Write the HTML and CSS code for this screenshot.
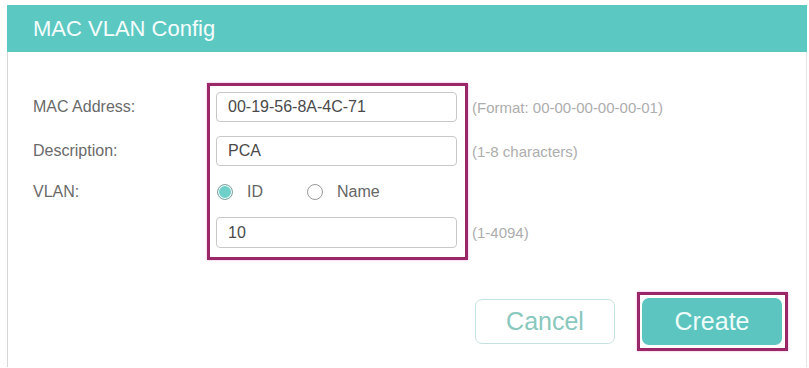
FILE: index.html
```html
<!DOCTYPE html>
<html lang="en">

<head>
    <meta charset="UTF-8">
    <meta name="viewport" content="width=device-width, initial-scale=1.0">
    <title>MAC VLAN Config</title>
    <link rel="stylesheet" href="styles.css">
</head>

<body>
    <!-- MAC VLAN Config Panel -->
    <div class="panel">
        <div class="panel-header">MAC VLAN Config</div>

        <div class="panel-body">
            <div class="form">
                <!-- Labels -->
                <div class="col labels">
                    <div class="row r1">MAC Address:</div>
                    <div class="row r2">Description:</div>
                    <div class="row r3">VLAN:</div>
                    <div class="row r4"></div>
                </div>

                <!-- Fields (highlighted) -->
                <div class="col fields">
                    <div class="row r1"><input class="text-input" type="text" value="00-19-56-8A-4C-71"></div>
                    <div class="row r2"><input class="text-input" type="text" value="PCA"></div>
                    <div class="row r3">
                        <label class="radio"><input type="radio" name="vlanType" checked> ID</label>
                        <label class="radio"><input type="radio" name="vlanType"> Name</label>
                    </div>
                    <div class="row r4"><input class="text-input" type="text" value="10"></div>
                </div>

                <!-- Hints -->
                <div class="col hints">
                    <div class="row r1">(Format: 00-00-00-00-00-01)</div>
                    <div class="row r2">(1-8 characters)</div>
                    <div class="row r3"></div>
                    <div class="row r4">(1-4094)</div>
                </div>
            </div>

            <div class="actions">
                <button class="btn btn-cancel">Cancel</button>
                <div class="create-mark">
                    <button class="btn btn-create">Create</button>
                </div>
            </div>
        </div>
    </div>
</body>

</html>
```

FILE: styles.css
```css
body {
    margin: 0;
    font-family: "Liberation Sans", Arial, sans-serif;
    background: #fff;
    overflow: hidden;
}

.panel {
    margin: 5px 0 0 7px;
    width: 800px;
}

.panel-header {
    height: 47px;
    background: #5cc8c2;
    color: #f4fdfc;
    font-size: 22px;
    line-height: 47px;
    padding-left: 26px;
}

.panel-body {
    border-left: 1px solid #d8d8d8;
    border-right: 1px solid #e6e6e6;
    padding: 31px 18px 16px 25px;
}

/* Form grid */
.form {
    display: flex;
    align-items: flex-start;
}

.col {
    display: flex;
    flex-direction: column;
}

.row {
    display: flex;
    align-items: center;
}

.r1 {
    height: 30px;
    margin-bottom: 14px;
}

.r2 {
    height: 30px;
}

.r3 {
    height: 51px;
}

.r4 {
    height: 31px;
}

.labels {
    width: 174px;
    padding-top: 9px;
    font-size: 16px;
    color: #6a6a6a;
}

.fields {
    border: 3px solid #9a2767;
    box-shadow: 0 0 2px #f0a8d0;
    padding: 6px 8px 9px 6px;
}

.hints {
    padding-top: 9px;
    margin-left: 4px;
    font-size: 15px;
    color: #adadad;
}

.text-input {
    box-sizing: border-box;
    width: 241px;
    height: 100%;
    border: 1px solid #c8c8c8;
    border-radius: 4px;
    padding: 0 11px;
    font-family: inherit;
    font-size: 16px;
    color: #4a4a4a;
    outline: none;
}

/* Radio buttons */
.radio {
    display: flex;
    align-items: center;
    font-size: 16px;
    color: #666;
    margin-right: 43px;
    margin-left: 1px;
}

.radio input {
    appearance: none;
    -webkit-appearance: none;
    width: 16px;
    height: 16px;
    margin: 0 14px 0 0;
    border: 1px solid #9a9a9a;
    border-radius: 50%;
    box-sizing: border-box;
}

.radio input:checked {
    background: #6fd0c9;
    box-shadow: inset 0 0 0 1px #fff;
    border-color: #8aa8a5;
}

/* Buttons */
.actions {
    display: flex;
    justify-content: flex-end;
    align-items: center;
    margin-top: 32px;
}

.btn {
    box-sizing: border-box;
    width: 140px;
    font-family: inherit;
    font-size: 25px;
    border-radius: 7px;
    cursor: pointer;
}

.btn-cancel {
    height: 45px;
    background: #fff;
    border: 1px solid #c5e2de;
    color: #8ac8be;
    margin-right: 22px;
}

.create-mark {
    border: 3px solid #9a2767;
    box-shadow: 0 0 2px #f0a8d0;
    padding: 3px 3px 3px 2px;
    display: flex;
}

.btn-create {
    height: 47px;
    background: #5cc5bf;
    border: none;
    color: #eefcfa;
}
```
